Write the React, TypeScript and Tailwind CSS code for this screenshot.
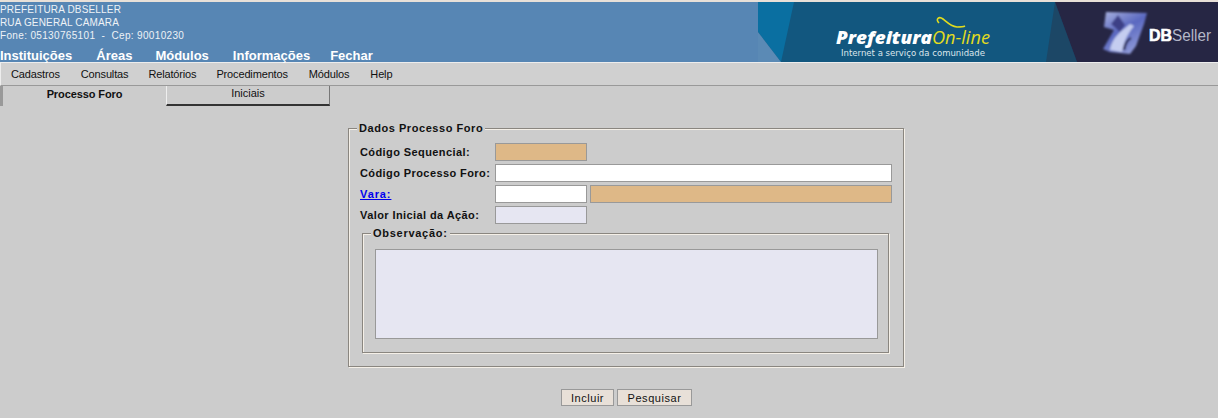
import React from "react";

function Banner() {
  return (
    <svg width="460" height="60" viewBox="0 0 460 60" className="block shrink-0">
      <defs>
        <linearGradient id="cube" x1="0" y1="0" x2="0.6" y2="1">
          <stop offset="0" stopColor="#aab3e0" />
          <stop offset="0.5" stopColor="#5a68c0" />
          <stop offset="1" stopColor="#8f9ad8" />
        </linearGradient>
        <filter id="soft"><feGaussianBlur stdDeviation="0.8" /></filter>
      </defs>
      <rect width="460" height="60" fill="#12577f" />
      <polygon points="0,0 36,0 23,60 0,30" fill="#0a6fa1" />
      <polygon points="0,30 23,60 0,60" fill="#5b8ab5" />
      <polygon points="297,0 319,60 288,60" fill="#1c4766" />
      <polygon points="297,0 460,0 460,60 319,60" fill="#262644" />
      <text x="78" y="42" fontFamily="'Open Sans', sans-serif" fontStyle="italic" fontWeight="800" fontSize="18" fill="#ffffff" textLength="96" lengthAdjust="spacingAndGlyphs">Prefeitura</text>
      <text x="174" y="42" fontFamily="'Open Sans', sans-serif" fontStyle="italic" fontWeight="400" fontSize="19" fill="#e2dc1e" textLength="58" lengthAdjust="spacingAndGlyphs">On-line</text>
      <path d="M181 21 C177 17 181 14 185 17 C189 20 192 24 199 25 C202 25 205 25 207 24" fill="none" stroke="#e2dc1e" strokeWidth="1.6" />
      <text x="83" y="54" fontFamily="'DejaVu Sans', sans-serif" fontSize="9" fill="#dce6ec" textLength="144" lengthAdjust="spacingAndGlyphs">Internet a serviço da comunidade</text>
      <g filter="url(#soft)">
        <path d="M348 10 L389 11 L386 22 L378 44 L372 52 L352 50 L345 47 L356 28 L346 25 Z" fill="url(#cube)" />
        <path d="M360 13 L367 23 L362 30 L353 22 Z" fill="#3d3f86" />
        <path d="M352 48 C354 36 362 30 372 22 L376 24 C368 34 366 40 364 50 Z" fill="#c5cdf0" />
        <path d="M366 48 C367 42 369 38 373 36" fill="none" stroke="#262650" strokeWidth="2.5" />
      </g>
      <text x="391" y="39" fontFamily="'Liberation Sans', sans-serif" fontWeight="700" fontSize="16" stroke="#ffffff" strokeWidth="0.6" fill="#ffffff" textLength="23" lengthAdjust="spacingAndGlyphs">DB</text>
      <text x="414" y="39" fontFamily="'Liberation Sans', sans-serif" fontSize="16" fill="#b4b7c8" textLength="39" lengthAdjust="spacingAndGlyphs">Seller</text>
    </svg>
  );
}

function Groove({ legend, legendClass, className, children }: { legend: string; legendClass: string; className: string; children: React.ReactNode }) {
  return (
    <fieldset className={`border border-[#8a8680] shadow-[inset_1px_1px_0_#f5f0e8,1px_1px_0_#f5f0e8] ${className}`}>
      <legend className={`px-[2px] bg-[#cccccc] text-[11px] leading-[13px] font-bold text-[#111] ${legendClass}`}>{legend}</legend>
      {children}
    </fieldset>
  );
}

function Row({ label, link, children }: { label: string; link?: boolean; children: React.ReactNode }) {
  return (
    <div className="flex items-center h-[18px]">
      <div className="w-[135px] shrink-0 text-[11px] font-bold tracking-[0.41px] text-[#111] whitespace-nowrap">
        {link ? <a href="#" className="text-[#0000ee] underline tracking-[0.9px]">{label}</a> : label}
      </div>
      <div className="flex gap-[3px]">{children}</div>
    </div>
  );
}

const box = "block h-[18px] border border-[#999] ";

export default function App() {
  return (
    <div className="w-[1218px] h-[418px] overflow-hidden bg-[#cccccc] font-['Liberation_Sans',Arial,sans-serif]">
      <div className="h-[2px] bg-[#e8e0d8]" />
      <header className="flex justify-between h-[60px] bg-[#5786b4]">
        <div className="text-white">
          <div className="pt-[1px] text-[10px] leading-[13px] text-[#eef2f6]">
            <div className="tracking-[0.17px]">PREFEITURA DBSELLER</div>
            <div className="tracking-[0.15px]">RUA GENERAL CAMARA</div>
            <div className="whitespace-pre tracking-[0.34px]">Fone: 05130765101  -  Cep: 90010230</div>
          </div>
          <nav className="flex gap-[24px] mt-[6px] text-[13px] leading-[15px] font-bold">
            <span>Instituições</span>
            <span>Áreas</span>
            <span className="-ml-[1px]">Módulos</span>
            <span>Informações</span>
            <span className="-ml-[4px]">Fechar</span>
          </nav>
        </div>
        <Banner />
      </header>
      <div className="h-[24px] flex items-center gap-[21px] pl-[10px] bg-[#d0d0d0] border-l border-l-[#ededed] border-t border-t-[#ededed] border-b border-b-[#999] text-[11px] tracking-[-0.15px] text-[#111]">
        <span>Cadastros</span>
        <span>Consultas</span>
        <span className="-ml-[1px]">Relatórios</span>
        <span className="-ml-[1px]">Procedimentos</span>
        <span>Módulos</span>
        <span>Help</span>
      </div>
      <div className="flex h-[21px] text-[11px] text-[#111]">
        <div className="w-[166px] h-[20px] border-l-[3px] border-l-[#999] text-center font-bold tracking-[-0.1px] leading-[17px]">Processo Foro</div>
        <div className="w-[164px] h-[20px] border-l border-l-[#eee] border-r border-r-[#777] border-b-2 border-b-[#333] text-center leading-[15px]">Iniciais</div>
      </div>
      <div className="pl-[348px] pt-[15px]">
        <Groove legend="Dados Processo Foro" legendClass="-ml-[3px] tracking-[0.55px]" className="w-[556px] h-[245px] pl-[11px]">
          <div className="flex flex-col gap-[3px] mt-[8px]">
            <Row label="Código Sequencial:"><div className={box + "w-[92px] bg-[#deb887]"} /></Row>
            <Row label="Código Processo Foro:"><div className={box + "w-[397px] bg-white"} /></Row>
            <Row label="Vara:" link>
              <div className={box + "w-[92px] bg-white"} />
              <div className={box + "w-[302px] bg-[#deb887]"} />
            </Row>
            <Row label="Valor Inicial da Ação:"><div className={box + "w-[92px] bg-[#e6e6f2]"} /></Row>
          </div>
          <Groove legend="Observação:" legendClass="-ml-[4px] tracking-[0.72px]" className="w-[527px] h-[126px] mt-[3px] ml-[2px] pl-[12px]">
            <div className="w-[503px] h-[90px] mt-[9px] border border-[#999] bg-[#e6e6f2]" />
          </Groove>
        </Groove>
        <div className="flex gap-[3px] ml-[213px] mt-[22px]">
          <div className="w-[53px] h-[17px] border border-[#999] bg-[#e8e0d8] text-center text-[11px] leading-[17px] tracking-[0.55px] text-[#111]">Incluir</div>
          <div className="w-[75px] h-[17px] border border-[#999] bg-[#e8e0d8] text-center text-[11px] leading-[17px] tracking-[0.55px] text-[#111]">Pesquisar</div>
        </div>
      </div>
    </div>
  );
}
